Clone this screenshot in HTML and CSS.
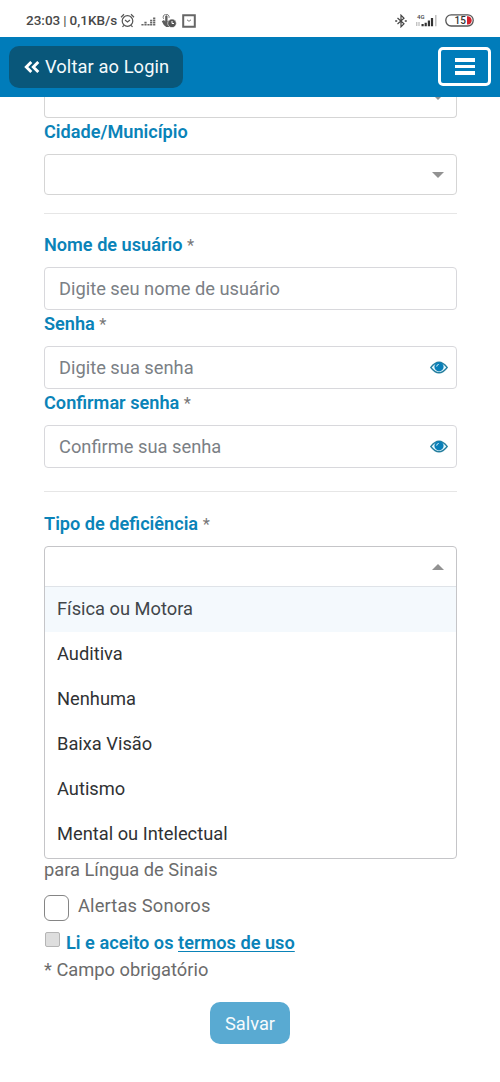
FILE: index.html
```html
<!DOCTYPE html>
<html lang="pt-BR">
<head>
<meta charset="utf-8">
<title>Cadastro</title>
<link rel="stylesheet" href="styles.css">
</head>
<body>
<div class="status">
  <span class="clock">23:03</span><span class="bar">|</span><span class="rate">0,1KB/s</span>
  <svg class="alarm" width="15" height="15" viewBox="0 0 15 15" fill="none" stroke="#555" stroke-width="1.2"><circle cx="7.5" cy="8" r="5.3"/><path d="M1 4.2 4 1.3M14 4.2 11 1.3M3.8 12.3 2.5 14M11.2 12.3l1.3 1.7M5 7l2.5 2L10 7"/></svg>
  <svg class="deezer" width="15" height="10" viewBox="0 0 15 10" stroke="#666" stroke-width="2.2" stroke-dasharray="1.6 .5"><path d="M1.5 9.5v-2M4.5 9.5V5.4M7.5 9.5V7.4M10.2 9.5V3.2M13.2 9.5V1"/></svg>
  <svg class="touch" width="16" height="14" viewBox="0 0 16 14"><path d="M.8 7.2 3 6l1.2 1.5V2.2Q5.3.5 6.5 2.2V7L9 7v6H5.2Q2.5 11.5.8 7.2Z" fill="#5d5d5d"/><path d="M2.6 4.8a3 3 0 1 1 5.5-1" fill="none" stroke="#777"/><circle cx="11" cy="9.3" r="4.3" fill="#555" stroke="#fff" stroke-width=".6"/><path d="M11 7v2.5h2" fill="none" stroke="#fff"/></svg>
  <svg class="app" width="14" height="14" viewBox="0 0 14 14" fill="none"><path d="M1.2 1.2h11.6v11.6H1.2Z" stroke="#666" stroke-width="2"/><path d="M5 5.8l2 1.5 2-1.5" stroke="#777"/></svg>
  <span class="grow"></span>
  <svg class="bt" width="12" height="14" viewBox="0 0 12 14" fill="none" stroke="#444" stroke-width="1.2"><path d="M2.5 4 9 9.7 6 12.8V1.2l3 3.1L2.5 10"/><path d="M.2 7h2M9.8 7h2" stroke-width="1.7"/></svg>
  <svg class="signal" width="23" height="15" viewBox="0 0 23 15"><text x="2" y="5.8" class="tiny">4G</text><path d="M1.8 9v4M4 9v4" stroke="#aaa"/><path d="M7.6 11v2.3M10.7 9.7v3.6M13.9 7.5v5.8M17 5v8.3" stroke="#333" stroke-width="2.2"/><path d="M20.8 2v11.3" stroke="#bbb" stroke-width="1.4"/></svg>
  <svg class="battery" width="29" height="13" viewBox="0 0 29 13"><rect x=".8" y=".8" width="27.4" height="11.2" rx="5.4" fill="#fff" stroke="#555" stroke-width="1.3"/><path d="M22 2.2h1q3.7.8 3.7 4.2T23 10.6h-1Z" fill="#d3222d"/><text x="9.5" y="9.8" class="pct">15</text></svg>
</div>
<header class="nav">
  <a class="back"><svg width="16" height="12" viewBox="0 0 16 12" fill="none" stroke="#fff" stroke-width="2.9"><path d="M7.3 1 2.3 6l5 5M14.3 1l-5 5 5 5"/></svg><span>Voltar ao Login</span></a>
  <div class="menu"><i></i><i></i><i></i></div>
</header>
<main class="form">
  <div class="select cut"><b class="caret"></b></div>
  <label class="label">Cidade/Município</label>
  <div class="select"><b class="caret"></b></div>
  <div class="rule"></div>
  <label class="label">Nome de usuário <em>*</em></label>
  <div class="input"><span>Digite seu nome de usuário</span></div>
  <label class="label">Senha <em>*</em></label>
  <div class="input"><span>Digite sua senha</span><svg width="18" height="13" viewBox="0 0 18 13"><path d="M.8 6.5Q9-4 17.2 6.5 9 17 .8 6.5Z" fill="#e6f8fd" stroke="#277f9f" stroke-width="1.3"/><circle cx="9" cy="5.8" r="4.6" fill="#087fb9"/><path d="M6.7 5.6q.1-2 2-2.2" stroke="#d5f1fb" fill="none"/></svg></div>
  <label class="label">Confirmar senha <em>*</em></label>
  <div class="input"><span>Confirme sua senha</span><svg width="18" height="13" viewBox="0 0 18 13"><path d="M.8 6.5Q9-4 17.2 6.5 9 17 .8 6.5Z" fill="#e6f8fd" stroke="#277f9f" stroke-width="1.3"/><circle cx="9" cy="5.8" r="4.6" fill="#087fb9"/><path d="M6.7 5.6q.1-2 2-2.2" stroke="#d5f1fb" fill="none"/></svg></div>
  <div class="rule second"></div>
  <label class="label">Tipo de deficiência <em>*</em></label>
  <div class="dropdown">
    <div class="head"><b class="caret up"></b></div>
    <div class="option active">Física ou Motora</div>
    <div class="option">Auditiva</div>
    <div class="option">Nenhuma</div>
    <div class="option">Baixa Visão</div>
    <div class="option">Autismo</div>
    <div class="option">Mental ou Intelectual</div>
  </div>
  <p class="hint">para Língua de Sinais</p>
  <div class="check"><span class="box"></span><span>Alertas Sonoros</span></div>
  <div class="terms"><span class="tick"></span><span class="agree">Li e aceito os <u>termos de uso</u></span></div>
  <p class="required">* Campo obrigatório</p>
  <button class="save">Salvar</button>
</main>
</body>
</html>
```
FILE: styles.css
```css
* { box-sizing: border-box; }
body { margin: 0; background: #fff; font: 18.3px/27px Roboto, "Liberation Sans", sans-serif; color: #6b6b6b; }
p { margin: 0; }
svg { display: block; flex: none; }

.status { height: 37px; padding: 4px 26px 0; display: flex; align-items: center; font-size: 13.5px; font-weight: 500; color: #484848; white-space: nowrap; }
.bar { margin: 0 3px; font-weight: 400; }
.alarm { margin-left: 3px; }
.deezer { margin-left: 6px; }
.touch { margin-left: 5px; }
.app { margin-left: 5px; }
.grow { flex: 1; }
.signal { margin-left: 8px; }
.battery { margin-left: 7px; }
.tiny { font: 500 6px Roboto, sans-serif; fill: #444; }
.pct { font: 500 10px Roboto, sans-serif; fill: #333; }

.nav { height: 60px; padding: 9px; display: flex; justify-content: space-between; background: #007cba; }
.back { width: 174px; height: 42px; padding: 0 0 1px 15px; display: flex; align-items: center; gap: 5px; border-radius: 10px; background: #09577a; color: #f4fafc; white-space: nowrap; letter-spacing: .1px; }
.menu { width: 53px; height: 39px; margin-top: 1px; display: flex; flex-direction: column; align-items: center; justify-content: center; gap: 3px; border: 3px solid #fff; border-radius: 5px; }
.menu i { width: 20px; height: 3.4px; background: #fff; }

.form { margin: 0 43px 0 44px; }
.label { display: block; height: 36px; font-size: 18.15px; font-weight: 600; color: #0a83b8; white-space: nowrap; }
.label em { font-size: 16.5px; font-style: normal; font-weight: 400; color: #777; }
.select { height: 41px; padding-right: 13px; display: flex; align-items: center; justify-content: flex-end; border: 1px solid #d5d5d5; border-radius: 4px; }
.cut { height: 21px; border-top: 0; border-radius: 0 0 4px 4px; align-items: flex-start; overflow: hidden; }
.cut .caret { margin-top: -3px; }
.caret { border: 6px solid transparent; border-top: 6px solid #929292; border-bottom: 0; }
.select .caret, .head .caret { margin-right: -1px; }
.head .up { border-top: 0; border-bottom: 6px solid #929292; }
.rule { height: 1px; margin: 18px 0 17px; background: #e6e6e6; }
.rule.second { margin: 23px 0 18px; }
.input { height: 43px; padding: 0 8px 0 14px; display: flex; align-items: center; justify-content: space-between; border: 1px solid #d8d8dc; border-radius: 4px; color: #7b8085; }

.dropdown { height: 313px; border: 1px solid #c5c5c8; border-radius: 4px; }
.head { height: 40px; padding-right: 13px; display: flex; align-items: center; justify-content: flex-end; border-bottom: 1px solid #dfe3e8; }
.option { height: 45px; padding-left: 12px; line-height: 44px; color: #303234; }
.active { background: #f4f9fd; color: #41464a; }
.hint { margin-top: -3px; white-space: nowrap; }
.check { margin-top: 12px; display: flex; align-items: flex-start; gap: 9px; line-height: 21px; letter-spacing: .15px; }
.box { width: 25px; height: 26px; border: 1px solid #858585; border-radius: 6px; }
.terms { margin-top: 8px; display: flex; align-items: flex-start; gap: 6px; }
.tick { width: 15px; height: 15px; margin: 3px 0 0 1px; border: 1px solid #b5b5b5; border-radius: 2px; background: #dedede; }
.agree { font-size: 18.2px; font-weight: 600; color: #0a83b8; white-space: nowrap; }
.agree u { text-underline-offset: 2px; text-decoration-thickness: 1px; }
.save { position: relative; left: -.5px; width: 80px; height: 42px; margin: 19px auto 0; padding: 0; display: block; border: 0; border-radius: 10px; background: #59aad2; color: #f6fbfd; font: inherit; }
```
